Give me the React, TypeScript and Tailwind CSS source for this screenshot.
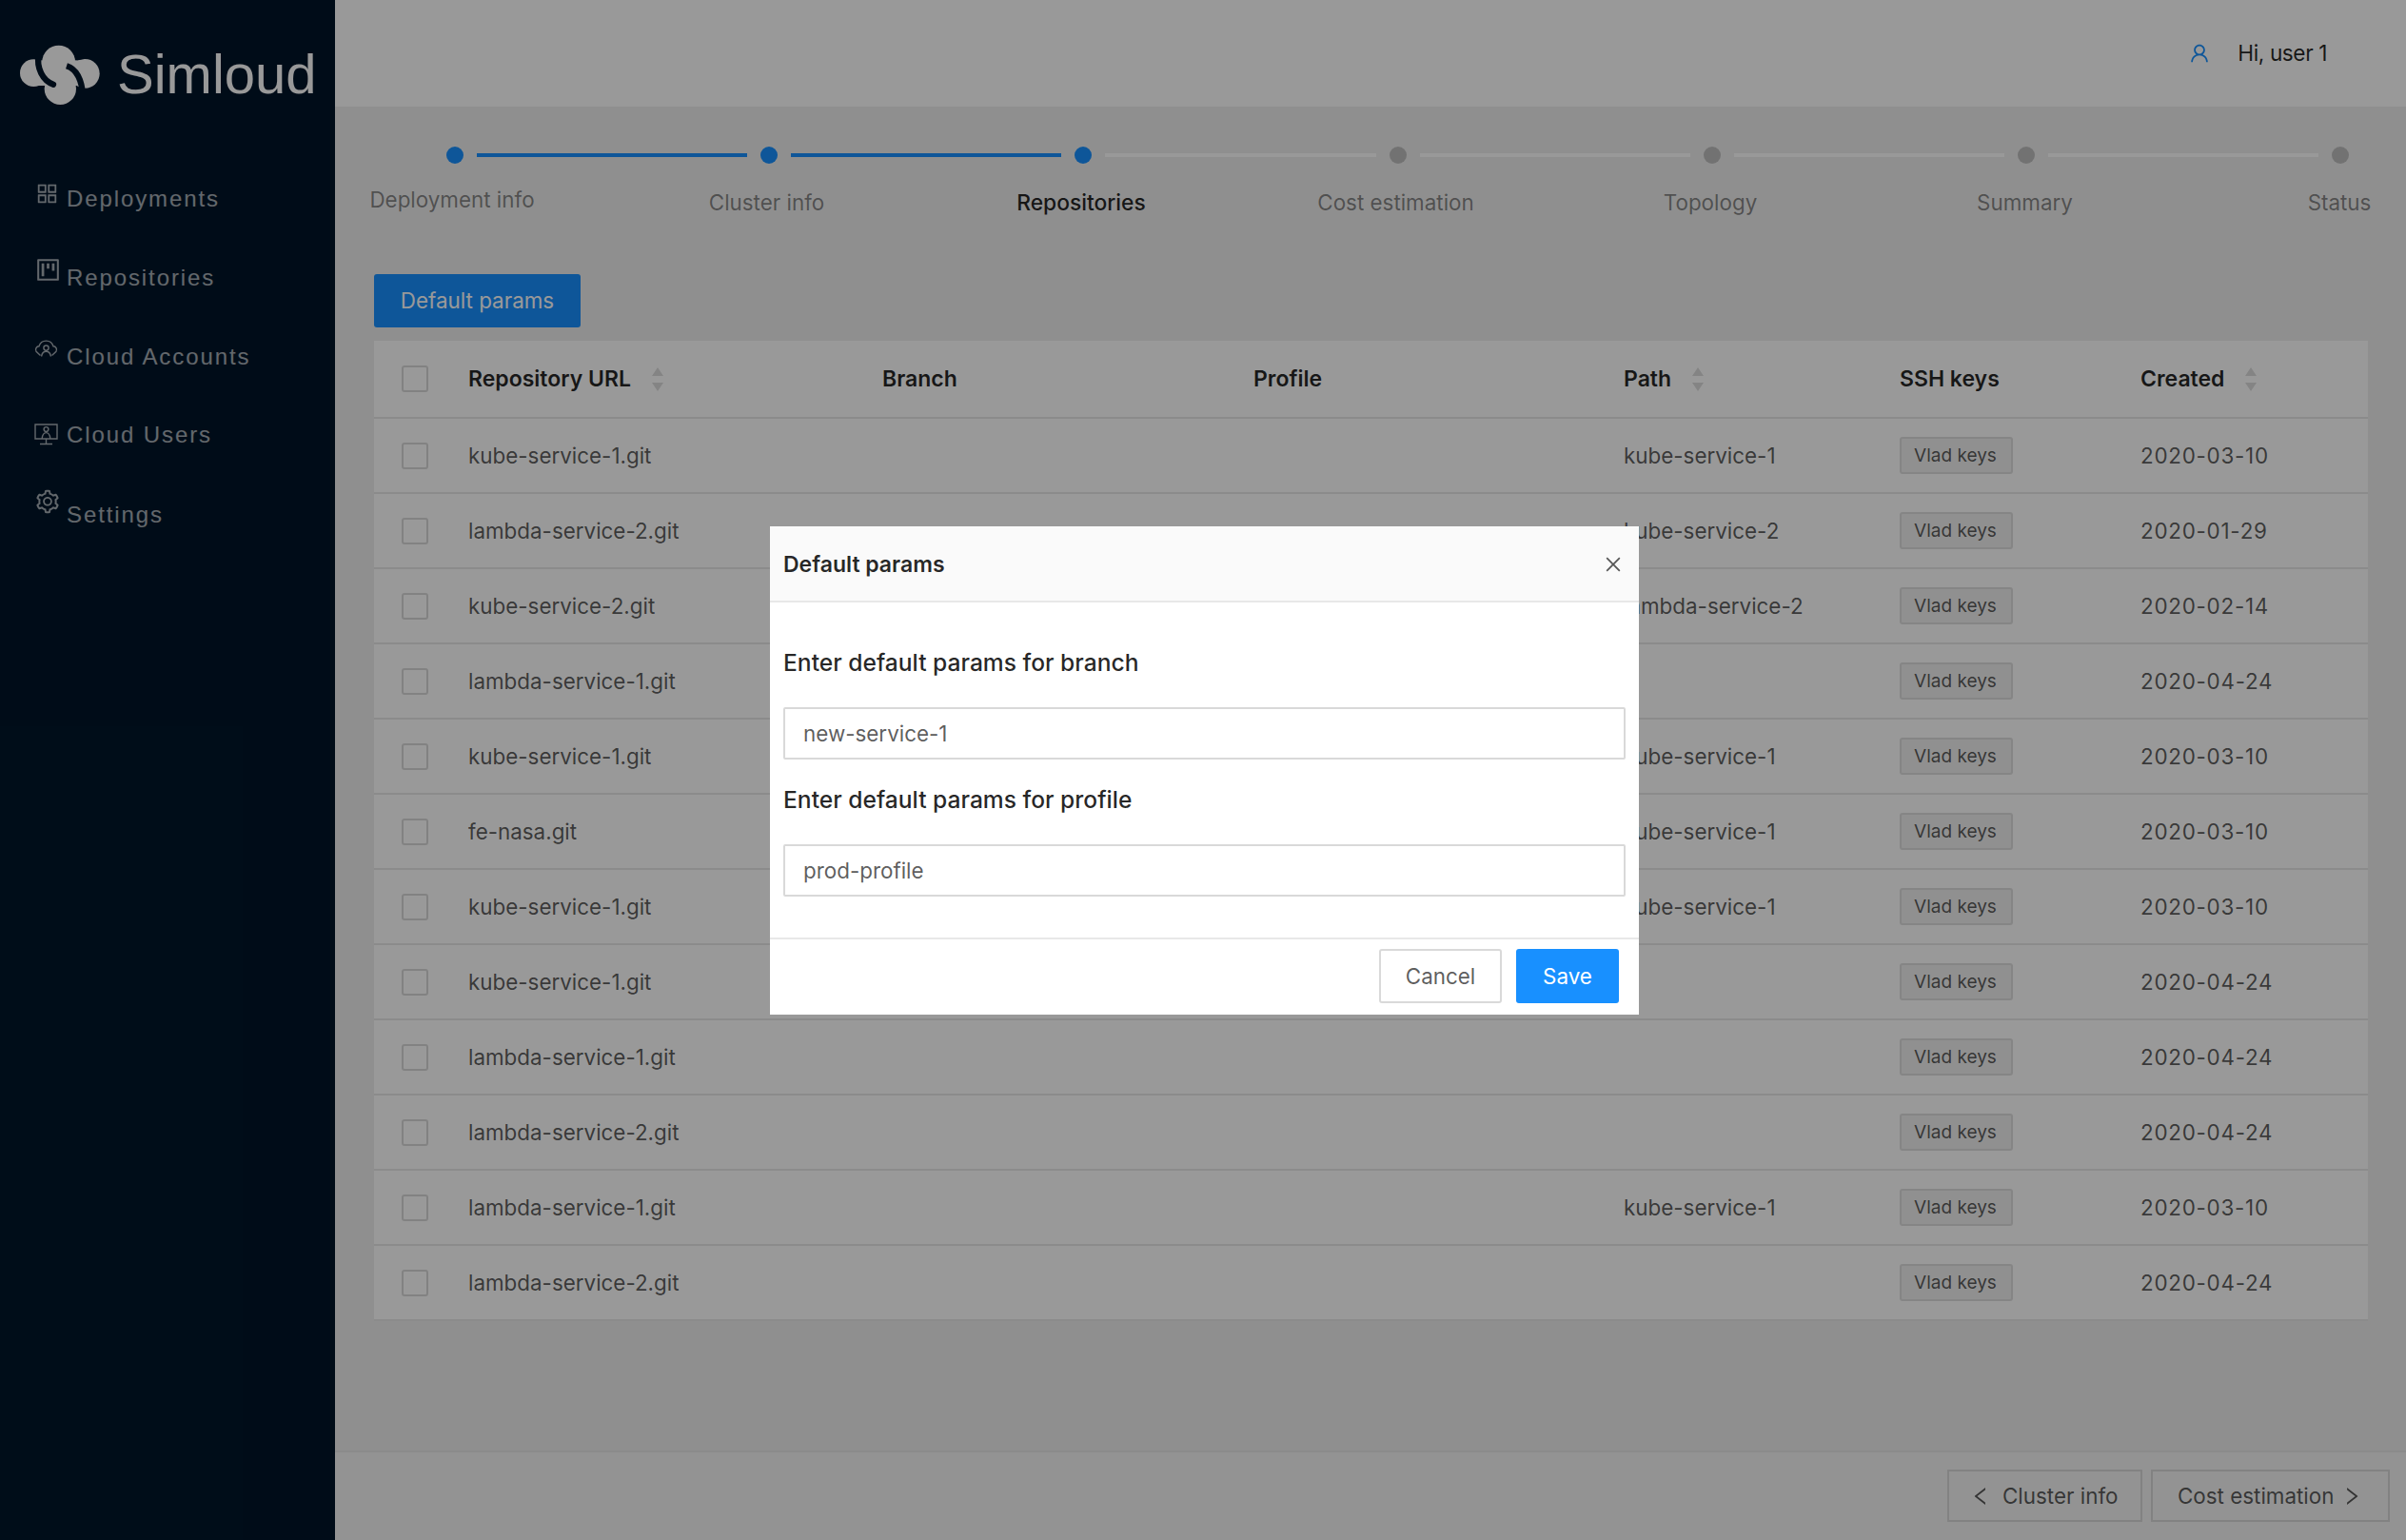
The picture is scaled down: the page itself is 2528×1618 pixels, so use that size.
import React from "react";
import {
  AiOutlineAppstore,
  AiOutlineProject,
  AiOutlineSetting,
  AiOutlineUser,
  AiOutlineClose,
  AiOutlineLeft,
  AiOutlineRight,
} from "react-icons/ai";

const font = "font-['Inter','Noto_Sans',sans-serif]";

function Logo() {
  return (
    <svg viewBox="0 0 330 240" className="w-[110px] h-[80px] shrink-0">
      <g fill="#ffffff">
        <circle cx="155" cy="105" r="52" />
        <circle cx="238" cy="142" r="46" />
        <circle cx="76" cy="140" r="43" />
        <circle cx="160" cy="190" r="50" />
        <rect x="90" y="100" width="140" height="80" />
      </g>
      <g fill="none" stroke="#001529" strokeLinecap="round">
        <path d="M92 80 C84 125 105 165 138 176" strokeWidth="19" />
        <path d="M180 118 C212 128 228 160 232 215" strokeWidth="19" strokeLinecap="butt" />
        <path d="M92 92 L84 70" strokeWidth="19" strokeLinecap="butt" />
      </g>
      <path d="M108 205 L88 185 L100 232 Z M213 80 L235 96 L212 100 Z" fill="#001529" />
    </svg>
  );
}

function CloudUser() {
  return (
    <svg viewBox="0 0 25 18" className="w-[25px] h-[18px]" fill="none" stroke="currentColor" strokeWidth="1.4">
      <path d="M6.5 16.5 L2 12.2 A3.6 3.6 0 0 1 5 6.8 A7.8 7.8 0 0 1 20 6.8 A3.6 3.6 0 0 1 23 12.2 L18.5 16.5" />
      <circle cx="12.5" cy="8.6" r="2.6" />
      <path d="M7.6 17.5 C8 14 10 12.2 12.5 12.2 S17 14 17.4 17.5" />
    </svg>
  );
}

function DesktopUser() {
  return (
    <svg viewBox="0 0 25 23" className="w-[25px] h-[23px]" fill="none" stroke="currentColor" strokeWidth="1.4">
      <path d="M7 16 H1 V1 H24 V16 H18" />
      <path d="M7 16 H18 M12.5 16 V21.5 M6 21.5 H19" />
      <circle cx="12.5" cy="6" r="2.4" />
      <path d="M8.2 15.5 C8.6 12 10.4 9.6 12.5 9.6 S16.4 12 16.8 15.5" />
    </svg>
  );
}

const navItems = [
  { id: 1, text: "Deployments", icon: <AiOutlineAppstore size={27} />, row: "h-[83px] pt-[3px]", shift: "-mt-[12px]" },
  { id: 2, text: "Repositories", icon: <AiOutlineProject size={29} />, row: "h-[84px] pt-[2px]", shift: "-mt-[18px]" },
  { id: 3, text: "Cloud Accounts", icon: <CloudUser />, row: "h-[83px]", shift: "-mt-[17px]" },
  { id: 4, text: "Cloud Users", icon: <DesktopUser />, row: "h-[83px] pb-[2px]", shift: "mt-0" },
  { id: 5, text: "Settings", icon: <AiOutlineSetting size={28} />, row: "h-[84px]", shift: "-mt-[28px]" },
];

const steps = [
  { id: 1, text: "Deployment info", state: "done" },
  { id: 2, text: "Cluster info", state: "done" },
  { id: 3, text: "Repositories", state: "active" },
  { id: 4, text: "Cost estimation", state: "todo" },
  { id: 5, text: "Topology", state: "todo" },
  { id: 6, text: "Summary", state: "todo" },
  { id: 7, text: "Status", state: "todo" },
];

const rows = [
  { id: 1, url: "kube-service-1.git", path: "kube-service-1", date: "2020-03-10" },
  { id: 2, url: "lambda-service-2.git", path: "kube-service-2", date: "2020-01-29" },
  { id: 3, url: "kube-service-2.git", path: "lambda-service-2", date: "2020-02-14" },
  { id: 4, url: "lambda-service-1.git", path: "", date: "2020-04-24" },
  { id: 5, url: "kube-service-1.git", path: "kube-service-1", date: "2020-03-10" },
  { id: 6, url: "fe-nasa.git", path: "kube-service-1", date: "2020-03-10" },
  { id: 7, url: "kube-service-1.git", path: "kube-service-1", date: "2020-03-10" },
  { id: 8, url: "kube-service-1.git", path: "", date: "2020-04-24" },
  { id: 9, url: "lambda-service-1.git", path: "", date: "2020-04-24" },
  { id: 10, url: "lambda-service-2.git", path: "", date: "2020-04-24" },
  { id: 11, url: "lambda-service-1.git", path: "kube-service-1", date: "2020-03-10" },
  { id: 12, url: "lambda-service-2.git", path: "", date: "2020-04-24" },
];

const gridCols = "grid grid-cols-[99px_435px_390px_389px_290px_253px_1fr] items-center";

function Checkbox() {
  return <span className="block ml-[29px] w-[28px] h-[28px] rounded-[3px] border-2 border-[#d9d9d9] bg-white" />;
}

function SortArrows() {
  return (
    <span className="ml-[22px] flex flex-col gap-[7px]">
      <svg viewBox="0 0 12 9" className="w-[12px] h-[9px]">
        <path d="M6 0 L12 9 H0 Z" fill="#dcdcdc" />
      </svg>
      <svg viewBox="0 0 12 9" className="w-[12px] h-[9px]">
        <path d="M6 9 L12 0 H0 Z" fill="#dcdcdc" />
      </svg>
    </span>
  );
}

export default function App() {
  return (
    <div className={"relative flex w-full h-[1618px] overflow-hidden text-[22.4px] " + font}>
      {/* Sidebar */}
      <aside className="w-[352px] shrink-0 bg-[#001529]">
        <div className="flex h-[112px] items-start pt-[30px] pl-[10px]">
          <Logo />
          <span className="ml-[3px] mt-[15px] font-['Liberation_Sans',sans-serif] text-[58px] leading-[66px] text-white">
            Simloud
          </span>
        </div>
        <nav className="pt-[54px]">
          {navItems.map((item) => (
            <div key={item.id} className={"flex items-center pl-[36px] text-white/65 " + item.row}>
              <span className={"flex w-[34px] shrink-0 " + item.shift}>{item.icon}</span>
              <span className="text-[24px] leading-[32px] tracking-[1.9px] font-['Liberation_Sans',sans-serif]">
                {item.text}
              </span>
            </div>
          ))}
        </nav>
      </aside>

      {/* Main */}
      <main className="flex flex-1 flex-col min-w-0">
        <header className="flex h-[112px] shrink-0 items-center justify-end bg-white pr-[83px]">
          <AiOutlineUser size={24} className="text-[#1890ff]" />
          <span className="ml-[28px] text-[22.6px] tracking-[-0.4px] text-black/85">Hi, user 1</span>
        </header>

        <div className="flex-1 bg-[#eeeeee] px-[40px] pl-[41px]">
          {/* Steps */}
          <div className="flex items-center pt-[42px] pl-[76px] pr-[20px]">
            {steps.map((step, index) => (
              <React.Fragment key={step.id}>
                <span
                  className={
                    "w-[18px] h-[18px] shrink-0 rounded-full " +
                    (step.state === "todo" ? "bg-[#bfbfbf]" : "bg-[#1890ff]")
                  }
                />
                {index < steps.length - 1 && (
                  <span className={"flex-1 h-[4px] mx-[14px] " + (index < 2 ? "bg-[#1890ff]" : "bg-white")} />
                )}
              </React.Fragment>
            ))}
          </div>
          <div className="flex justify-between pt-[25px] pl-[73px] pr-[21px]">
            {steps.map((step) => (
              <span key={step.id} className="flex w-[18px] justify-center whitespace-nowrap">
                <span
                  className={
                    "leading-[32px] " +
                    (step.id === 1 ? "-mt-[3px] " : "") +
                    (step.state === "active" ? "text-[22.8px] font-medium text-black/85" : "text-black/45")
                  }
                >
                  {step.text}
                </span>
              </span>
            ))}
          </div>

          <button className="mt-[59px] block w-[217px] h-[56px] rounded-[3px] bg-[#1890ff] text-white">
            Default params
          </button>

          {/* Table */}
          <div className="mt-[14px] bg-white">
            <div className={gridCols + " h-[82px] border-b-2 border-[#e8e8e8] text-[23px] font-semibold text-black/85"}>
              <Checkbox />
              <span className="flex items-center">
                Repository URL
                <SortArrows />
              </span>
              <span>Branch</span>
              <span>Profile</span>
              <span className="flex items-center">
                Path
                <SortArrows />
              </span>
              <span>SSH keys</span>
              <span className="flex items-center">
                Created
                <SortArrows />
              </span>
            </div>
            {rows.map((row) => (
              <div key={row.id} className={gridCols + " h-[79px] border-b-2 border-[#e8e8e8] text-black/65"}>
                <Checkbox />
                <span>{row.url}</span>
                <span />
                <span />
                <span>{row.path}</span>
                <span className="flex h-[39px] w-[119px] items-center justify-center rounded-[3px] border-2 border-[#dedede] bg-[#f0f0f0] pt-[1px] pr-[2px] text-[19px]">
                  Vlad keys
                </span>
                <span className="tracking-[0.75px]">{row.date}</span>
              </div>
            ))}
          </div>
        </div>

        {/* Footer */}
        <footer className="flex h-[94px] shrink-0 items-start justify-end gap-[9px] border-t-2 border-[#e8e8e8] bg-[#f5f5f5] pt-[18px] pr-[17px] text-black/65">
          <button className="flex h-[55px] w-[205px] items-center gap-[11px] border-2 border-[#d9d9d9] bg-[#f5f5f5] pl-[21px]">
            <AiOutlineLeft size={24} />
            Cluster info
          </button>
          <button className="flex h-[55px] w-[251px] items-center gap-[7px] border-2 border-[#d9d9d9] bg-[#f5f5f5] pl-[26px]">
            Cost estimation
            <AiOutlineRight size={24} />
          </button>
        </footer>
      </main>

      {/* Modal */}
      <div className="absolute inset-0 flex items-start justify-center bg-black/40 pt-[553px] pl-[3px]">
        <div className="w-[913px] h-[513px] bg-white flex flex-col">
          <div className="flex h-[80px] shrink-0 items-center justify-between border-b-2 border-[#e8e8e8] bg-[#fafafa] pl-[14px] pr-[16px]">
            <span className="pt-[2px] text-[23px] font-semibold text-black/85">Default params</span>
            <AiOutlineClose size={22} className="mt-[2px] text-black/65" />
          </div>
          <div className="flex-1 px-[14px] pt-[47px]">
            <label className="block leading-[32px] font-medium text-black/85 text-[24.6px]">
              Enter default params for branch
            </label>
            <input
              defaultValue="new-service-1"
              className="mt-[31px] block w-full h-[55px] border-2 border-[#d9d9d9] rounded-[2px] px-[19px] text-black/65 outline-none"
            />
            <label className="mt-[26px] block leading-[32px] font-medium text-black/85 text-[24.6px]">
              Enter default params for profile
            </label>
            <input
              defaultValue="prod-profile"
              className="mt-[31px] block w-full h-[55px] border-2 border-[#d9d9d9] rounded-[2px] px-[19px] text-black/65 outline-none"
            />
          </div>
          <div className="flex h-[81px] shrink-0 items-start justify-end gap-[15px] border-t-2 border-[#e8e8e8] pt-[10px] pr-[21px]">
            <button className="w-[129px] h-[57px] rounded-[3px] border-2 border-[#d9d9d9] bg-white text-black/65">
              Cancel
            </button>
            <button className="w-[108px] h-[57px] rounded-[3px] bg-[#1890ff] text-white">Save</button>
          </div>
        </div>
      </div>
    </div>
  );
}
